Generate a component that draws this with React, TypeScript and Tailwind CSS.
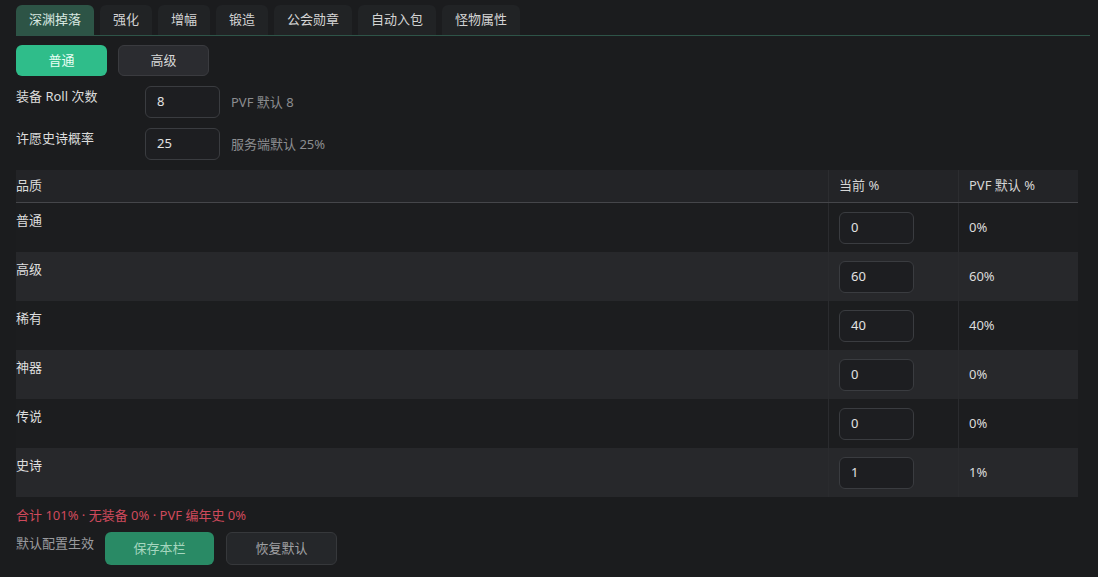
import React from 'react';

const tabs = ['深渊掉落', '强化', '增幅', '锻造', '公会勋章', '自动入包', '怪物属性'];

const rows = [
  { name: '普通', cur: '0', def: '0%' },
  { name: '高级', cur: '60', def: '60%' },
  { name: '稀有', cur: '40', def: '40%' },
  { name: '神器', cur: '0', def: '0%' },
  { name: '传说', cur: '0', def: '0%' },
  { name: '史诗', cur: '1', def: '1%' },
];

const font = { fontFamily: '"Noto Sans", "Noto Sans CJK SC", sans-serif' };

const NumInput = ({ value }: { value: string }) => (
  <div className="w-[75px] h-[32px] rounded-md border border-[#3a3c40] bg-[#1d1e21] flex items-center px-[11px] text-[13px] text-[#e2e2e2]">
    {value}
  </div>
);

export default function App() {
  return (
    <div className="w-[1098px] h-[577px] bg-[#1b1c1e] text-[#d6d6d6] text-[13px] overflow-hidden" style={font}>
      <div className="pt-[5px] pl-[16px] pr-[8px]">
        <div className="flex gap-[6px] border-b border-[#2e5448]">
          {tabs.map((t, i) => (
            <div
              key={t}
              className={
                'h-[30px] px-[13px] flex items-center rounded-t-md ' +
                (i === 0 ? 'bg-[#2d5446] text-[#d8e8e0]' : 'bg-[#212325] text-[#d4d4d4]')
              }
            >
              {t}
            </div>
          ))}
        </div>
      </div>

      <div className="pl-[16px] pr-[20px] pt-[9px]">
        <div className="flex gap-[11px]">
          <div className="w-[91px] h-[31px] rounded-md bg-[#2fbd8a] text-[#eafff5] flex items-center justify-center">普通</div>
          <div className="w-[91px] h-[31px] rounded-md bg-[#2b2c30] border border-[#3a3b3f] text-[#d8d8d8] flex items-center justify-center">高级</div>
        </div>

        <div className="mt-[10px] flex flex-col gap-[10px]">
          {[
            { label: '装备 Roll 次数', value: '8', hint: 'PVF 默认 8' },
            { label: '许愿史诗概率', value: '25', hint: '服务端默认 25%' },
          ].map((r) => (
            <div key={r.label} className="flex">
              <div className="w-[129px] leading-[20px] text-[#dcdcdc]">{r.label}</div>
              <NumInput value={r.value} />
              <div className="ml-[11px] self-center pt-[2px] text-[#8c8d90]">{r.hint}</div>
            </div>
          ))}
        </div>

        <div className="mt-[10px] w-[1062px]">
          <div className="grid grid-cols-[812px_130px_120px] h-[33px] bg-[#232427] border-b border-[#45464a] items-center">
            <div className="text-[#d8d8d8]">品质</div>
            <div className="h-full flex items-center pl-[10px] border-l border-[#2c2d30]">当前 %</div>
            <div className="h-full flex items-center pl-[10px] border-l border-[#2c2d30]">PVF 默认 %</div>
          </div>
          {rows.map((r, i) => (
            <div
              key={r.name}
              className={'grid grid-cols-[812px_130px_120px] h-[49px] ' + (i % 2 === 1 ? 'bg-[#27282b]' : 'bg-[#1c1d1f]')}
            >
              <div className="pt-[7px] leading-[20px] text-[#dedede]">{r.name}</div>
              <div className="pl-[10px] flex items-center border-l border-[#2a2b2e]">
                <NumInput value={r.cur} />
              </div>
              <div className="pl-[10px] flex items-center border-l border-[#2a2b2e] text-[#dcdcdc]">{r.def}</div>
            </div>
          ))}
        </div>

        <div className="mt-[8px] text-[#cf4a5c] leading-[20px]">合计 101% · 无装备 0% · PVF 编年史 0%</div>

        <div className="mt-[7px] flex">
          <div className="w-[89px] pt-[1px] leading-[20px] text-[#9a9b9e]">默认配置生效</div>
          <div className="w-[109px] h-[33px] rounded-md bg-[#298a65] text-[#a6d6bf] flex items-center justify-center">保存本栏</div>
          <div className="ml-[12px] w-[111px] h-[33px] rounded-md bg-[#25272a] border border-[#36383b] text-[#a0a1a4] flex items-center justify-center">恢复默认</div>
        </div>
      </div>
    </div>
  );
}
